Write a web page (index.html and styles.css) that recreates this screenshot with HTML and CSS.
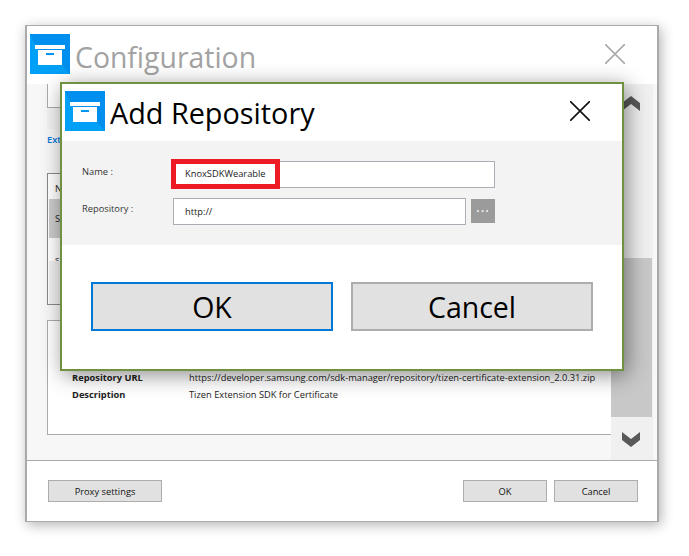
FILE: index.html
```html
<!DOCTYPE html>
<html>
<head>
<meta charset="utf-8">
<title>Add Repository</title>
<link rel="stylesheet" href="styles.css">
</head>
<body>
<div class="win">
	<div class="win-head">
		<svg class="box-icon" viewBox="0 0 40 40"><use href="#box"/></svg>
		<span class="win-title">Configuration</span>
		<svg class="win-close" viewBox="0 0 20 20"><path d="M0 0L20 20M20 0L0 20"/></svg>
	</div>
	<div class="win-body">
		<div class="main">
			<div class="top-box"></div>
			<div class="top-band"></div>
			<div class="ext-link">Extension SDK</div>
			<div class="list">
				<div class="list-head">Name</div>
				<div class="list-sel">Samsung</div>
				<div class="list-row">samsung</div>
				<div class="list-rest"></div>
			</div>
			<div class="detail">
				<div class="detail-row"><b>Repository URL</b><span>https://developer.samsung.com/sdk-manager/repository/tizen-certificate-extension_2.0.31.zip</span></div>
				<div class="detail-row"><b>Description</b><span>Tizen Extension SDK for Certificate</span></div>
			</div>
		</div>
		<div class="scroll">
			<div class="scroll-btn"><svg viewBox="0 0 18 16"><path d="M0 15V7L9 0L18 7V15L9 8Z"/></svg></div>
			<div class="scroll-track"><div class="scroll-thumb"></div></div>
			<div class="scroll-btn scroll-btn-down"><svg viewBox="0 0 18 16"><path d="M0 1V9L9 16L18 9V1L9 8Z"/></svg></div>
		</div>
	</div>
	<div class="win-foot">
		<button class="btn btn-proxy">Proxy settings</button>
		<div class="foot-right">
			<button class="btn btn-small">OK</button>
			<button class="btn btn-small">Cancel</button>
		</div>
	</div>
</div>

<div class="dlg">
	<div class="dlg-head">
		<svg class="box-icon" viewBox="0 0 40 40">
			<g id="box">
				<rect width="40" height="40" fill="#00a0f6"/>
				<path d="M0 0H40V40L32 31H8V15L5 11Z" fill="#008fee"/>
				<rect x="5" y="11" width="30" height="4" fill="#fff"/>
				<rect x="8" y="16" width="24" height="15" fill="#fff"/>
				<rect x="16" y="19" width="8" height="2" fill="#0095f2"/>
			</g>
		</svg>
		<span class="dlg-title">Add Repository</span>
		<svg class="dlg-close" viewBox="0 0 20 20"><path d="M0 0L20 20M20 0L0 20"/></svg>
	</div>
	<div class="form">
		<div class="form-row">
			<label>Name :</label>
			<div class="input input-name">
				<span class="mark">KnoxSDKWearable</span>
			</div>
		</div>
		<div class="form-row form-row2">
			<label>Repository :</label>
			<div class="input input-repo">http://</div>
			<div class="dots">&middot;&middot;&middot;</div>
		</div>
	</div>
	<div class="dlg-btns">
		<button class="btn btn-big btn-focus">OK</button>
		<button class="btn btn-big">Cancel</button>
	</div>
</div>
</body>
</html>
```
FILE: styles.css
```css
html, body { margin: 0; padding: 0; background: #fff; }
body { width: 689px; height: 556px; overflow: hidden; position: relative; font-family: "Open Sans", "Noto Sans", sans-serif; font-size: 9.3px; color: #222; }

.win { position: absolute; left: 25px; top: 25px; width: 630px; height: 495px; border: 1px solid #aaa; border-left-width: 2px; border-right-width: 2px; background: #fff; display: flex; flex-direction: column; box-shadow: 2px 3px 12px rgba(0,0,0,.3); }
.win-head { height: 58px; display: flex; align-items: flex-start; position: relative; flex: none; }
.box-icon { width: 40px; height: 40px; flex: none; }
.win-head .box-icon { margin: 8px 0 0 3px; }
.win-title { font-size: 28.4px; line-height: 40px; margin: 11px 0 0 5px; color: #a3a3a3; }
.win-close { position: absolute; left: 578px; top: 18px; width: 20px; height: 20px; fill: none; stroke: #aaa; stroke-width: 1.6; }

.win-body { height: 376px; display: flex; background: #f7f7f7; border-bottom: 1px solid #aaa; flex: none; }
.main { width: 584px; padding-left: 20px; box-sizing: border-box; flex: none; }
.top-box { width: 120px; height: 24px; border: 1px solid #aaa; border-top: 0; box-sizing: border-box; background: #fff; }
.top-band { width: 120px; height: 21px; background: #f2f2f2; }
.ext-link { margin-top: 4px; height: 14px; line-height: 14px; color: #0078d7; font-weight: 600; }
.list { margin-top: 26px; width: 200px; height: 132px; box-sizing: border-box; border: 1px solid #888; background: #fff; }
.list-head { height: 25px; line-height: 29px; padding-left: 7px; }
.list-sel { height: 39px; margin-left: 1px; background: #ccc; padding: 0 6px; box-sizing: border-box; display: flex; align-items: center; }
.list-row { height: 23px; padding: 15px 0 0 7px; box-sizing: border-box; line-height: 14px; }
.list-rest { height: 43px; background: #f0f0f0; margin-left: 1px; position: relative; }

.detail { margin-top: 15px; width: 564px; height: 115px; box-sizing: border-box; border: 1px solid #aaa; border-right: 0; background: #fff; padding-top: 48px; }
.detail-row { display: flex; height: 17px; line-height: 17px; padding-left: 24px; }
.detail-row b { width: 117px; flex: none; font-weight: 700; }

.scroll { width: 42px; display: flex; flex-direction: column; background: #f0f0f0; flex: none; }
.scroll-btn { height: 40px; display: flex; align-items: center; justify-content: center; flex: none; padding-right: 2px; }
.scroll-btn-down { height: 43px; padding-top: 1px; box-sizing: border-box; }
.scroll-btn svg { width: 18px; height: 16px; fill: #595959; }
.scroll-track { flex: 1; padding-top: 134px; }
.scroll-thumb { height: 159px; width: 41px; background: #c8c8c8; }

.win-foot { flex: 1; display: flex; justify-content: space-between; align-items: flex-start; padding: 19px 19px 0 21px; background: #fff; }
.foot-right { display: flex; gap: 7px; }
.btn { background: #e1e1e1; border: 1px solid #adadad; padding: 0; font-family: inherit; color: #111; font-size: 9.3px; box-sizing: border-box; }
.btn-proxy { width: 114px; height: 22px; }
.btn-small { width: 84px; height: 22px; }

.dlg { position: absolute; left: 60px; top: 82px; width: 564px; height: 289px; box-sizing: border-box; border: 2px solid #6f9140; background: #fff; box-shadow: 3px 4px 20px rgba(0,0,0,.45); }
.dlg-head { height: 57px; display: flex; align-items: flex-start; position: relative; }
.dlg-head .box-icon { margin: 7px 0 0 3px; }
.dlg-title { font-size: 28.8px; line-height: 40px; margin: 9px 0 0 5px; color: #000; }
.dlg-close { position: absolute; left: 508px; top: 17px; width: 20px; height: 20px; fill: none; stroke: #111; stroke-width: 1.6; }

.form { height: 104px; background: #f3f3f3; box-sizing: border-box; padding: 20px 0 0 20px; }
.form-row { display: flex; align-items: flex-start; }
.form-row2 { margin-top: 10px; }
.form-row label { width: 91px; flex: none; line-height: 14px; padding-top: 4px; color: #333; }
.input { height: 27px; box-sizing: border-box; background: #fff; border: 1px solid #adadb5; line-height: 25px; padding-left: 11px; }
.input-name { width: 322px; padding: 0; position: relative; }
.mark { position: absolute; left: -3px; top: -3px; width: 109px; height: 30px; box-sizing: border-box; border: 5px solid #ed1c24; padding-left: 9px; line-height: 20px; background: #fff; }
.input-repo { width: 293px; }
.dots { width: 24px; height: 24px; margin: 1px 0 0 5px; background: #9b9b9b; color: #fff; text-align: center; line-height: 24px; font-size: 14px; letter-spacing: 1px; }

.dlg-btns { display: flex; gap: 18px; padding: 37px 0 0 29px; }
.btn-big { width: 242px; height: 49px; font-size: 28.5px; border-width: 2px; color: #000; }
.btn-focus { border-color: #0078d7; }
```
